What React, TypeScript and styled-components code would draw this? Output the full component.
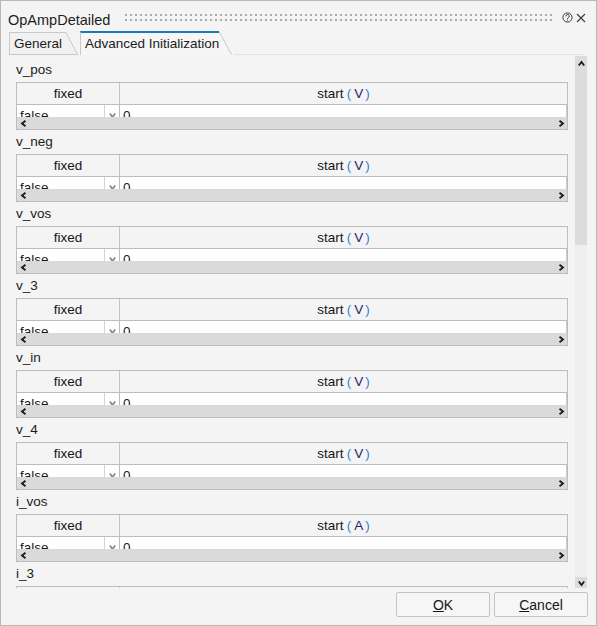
import React from 'react';
import styled, { createGlobalStyle } from 'styled-components';

const GlobalStyle = createGlobalStyle`
  html, body {
    margin: 0;
    padding: 0;
    background: #f4f4f4;
  }
  body {
    font-family: 'Liberation Sans', Arial, sans-serif;
    font-size: 13.5px;
    color: #1b1b1b;
  }
  * {
    box-sizing: border-box;
  }
`;

const Window = styled.div`
  width: 597px;
  height: 626px;
  border: 1px solid #b8b8b8;
  background: #f4f4f4;
  display: flex;
  flex-direction: column;
  overflow: hidden;
`;

// --- title bar --- //
const TitleBar = styled.div`
  height: 30px;
  flex-shrink: 0;
  display: flex;
  align-items: flex-start;
  padding: 0 10px 0 7px;
`;

const Title = styled.div`
  margin-top: 10px;
  font-size: 14.5px;
  line-height: 18px;
  color: #1e1e1e;
`;

const Grip = styled.svg`
  flex: 1;
  height: 8px;
  margin: 13px 9px 0 15px;
`;

const TitleIcon = styled.svg<{ $top: number; $gap?: number }>`
  margin-top: ${p => p.$top}px;
  margin-left: ${p => p.$gap ?? 0}px;
  flex-shrink: 0;
`;

// --- tabs --- //
const TabBar = styled.div`
  height: 24px;
  flex-shrink: 0;
  display: flex;
  align-items: flex-end;
  padding: 0 11px 0 8px;
  margin-bottom: 1px;
`;

const Tab = styled.div<{ $active?: boolean }>`
  display: flex;
  height: ${p => (p.$active ? 24 : 23)}px;
  margin-right: 2px;
`;

const TabBody = styled.div<{ $active?: boolean; $width: number }>`
  width: ${p => p.$width}px;
  border-left: 1px solid #c8c8c8;
  border-top: ${p => (p.$active ? '2px solid #1d78b3' : '1px solid #c8c8c8')};
  border-bottom: ${p => (p.$active ? 'none' : '1px solid #c8c8c8')};
  background: ${p => (p.$active ? '#f6f6f6' : '#f1f1f1')};
  padding-left: 4px;
  line-height: ${p => (p.$active ? 22 : 21)}px;
  color: #1b1b1b;
  white-space: nowrap;
`;

const TabSlant = styled.svg`
  display: block;
  flex-shrink: 0;
`;

const TabFiller = styled.div`
  flex: 1;
  height: 1px;
  background: #e2e2e2;
`;

// --- scrolling content --- //
const ScrollArea = styled.div`
  height: 532px;
  flex-shrink: 0;
  margin: 0 9px 0 7px;
  display: flex;
`;

const Content = styled.div`
  flex: 1;
  overflow: hidden;
  padding: 2px 7px 0 8px;
`;

const GroupLabel = styled.div`
  height: 24px;
  line-height: 24px;
  color: #1b1b1b;
`;

const Table = styled.div`
  border: 1px solid #bdbdbd;
  display: flex;
  flex-direction: column;
`;

const HeaderRow = styled.div`
  display: grid;
  grid-template-columns: 102px 1fr;
  height: 21px;
`;

const HeaderCell = styled.div<{ $divider?: boolean }>`
  text-align: center;
  line-height: 21px;
  border-left: ${p => (p.$divider ? '1px solid #c4c4c4' : 'none')};
  color: #151515;
  white-space: nowrap;
`;

const Paren = styled.span<{ $open?: boolean }>`
  color: #3f80d6;
  margin-left: ${p => (p.$open ? 3 : 0)}px;
`;

const Unit = styled.span`
  color: #1f2a66;
  margin: 0 2px 0 3px;
`;

const DataRow = styled.div`
  display: grid;
  grid-template-columns: 102px 1fr;
  height: 13px;
  border-top: 1px solid #bdbdbd;
  overflow: hidden;
`;

const Combo = styled.div`
  display: flex;
  background: #fff;
`;

const ComboText = styled.div`
  flex: 1;
  padding: 3px 0 0 3px;
  line-height: 16px;
  color: #1b1b1b;
`;

const ComboButton = styled.div`
  width: 15px;
  border-left: 1px solid #d2d2d2;
  display: flex;
  justify-content: center;
  padding-top: 7px;
`;

const ValueCell = styled.div`
  background: #fff;
  border-left: 1px solid #bdbdbd;
  border-right: 1px solid #cacaca;
  padding: 3px 0 0 3px;
  line-height: 16px;
  color: #1b1b1b;
`;

const HScroll = styled.div`
  height: 12px;
  background: #dadada;
  display: flex;
  align-items: center;
  justify-content: space-between;
  padding: 0 2px 0 3px;
`;

const VScroll = styled.div`
  width: 12px;
  display: flex;
  flex-direction: column;
  background: #efefef;
`;

const VThumb = styled.div`
  height: 189px;
  background: #dcdcdc;
  display: flex;
  justify-content: center;
  padding-top: 4px;
`;

const VTrack = styled.div`
  flex: 1;
`;

const VDown = styled.div`
  height: 11px;
  background: #dcdcdc;
  display: flex;
  justify-content: center;
  padding-top: 3px;
`;

// --- footer --- //
const Footer = styled.div`
  flex: 1;
  display: flex;
  justify-content: flex-end;
  align-items: flex-start;
  gap: 4px;
  padding: 4px 8px 0 0;
`;

const Button = styled.button`
  width: 94px;
  height: 25px;
  border: 1px solid #c4c4c4;
  border-radius: 2px;
  background: #f6f6f6;
  font-family: 'Liberation Sans', Arial, sans-serif;
  font-size: 14px;
  color: #161616;
  padding: 0;
  cursor: pointer;
`;

type Group = { name: string; unit: string };

const groups: Group[] = [
  { name: 'v_pos', unit: 'V' },
  { name: 'v_neg', unit: 'V' },
  { name: 'v_vos', unit: 'V' },
  { name: 'v_3', unit: 'V' },
  { name: 'v_in', unit: 'V' },
  { name: 'v_4', unit: 'V' },
  { name: 'i_vos', unit: 'A' },
  { name: 'i_3', unit: 'A' },
  { name: 'i_4', unit: 'A' },
];

const Chevron: React.FC<{ dir: 'left' | 'right' | 'up' | 'down'; color?: string }> = ({ dir, color = '#1a1a1a' }) => {
  const rot = { right: 0, down: 90, left: 180, up: 270 }[dir];
  return (
    <svg width="7" height="7" viewBox="0 0 7 7">
      <path
        d="M1.5 0.8 L5 3.5 L1.5 6.2"
        fill="none"
        stroke={color}
        strokeWidth="1.8"
        transform={`rotate(${rot} 3.5 3.5)`}
      />
    </svg>
  );
};

const InitTable: React.FC<{ group: Group }> = ({ group }) => (
  <>
    <GroupLabel>{group.name}</GroupLabel>
    <Table>
      <HeaderRow>
        <HeaderCell>fixed</HeaderCell>
        <HeaderCell $divider>
          start<Paren $open>(</Paren>
          <Unit>{group.unit}</Unit>
          <Paren>)</Paren>
        </HeaderCell>
      </HeaderRow>
      <DataRow>
        <Combo>
          <ComboText>false</ComboText>
          <ComboButton>
            <Chevron dir="down" color="#8a8a8a" />
          </ComboButton>
        </Combo>
        <ValueCell>0</ValueCell>
      </DataRow>
      <HScroll>
        <Chevron dir="left" />
        <Chevron dir="right" />
      </HScroll>
    </Table>
  </>
);

const App: React.FC = () => {
  return (
    <>
      <GlobalStyle />
      <Window>
        <TitleBar>
          <Title>OpAmpDetailed</Title>
          <Grip preserveAspectRatio="none">
            <defs>
              <pattern id="grip-dots" width="5" height="8" patternUnits="userSpaceOnUse">
                <rect x="0" y="0" width="2" height="2" fill="#ababab" />
                <rect x="0" y="5" width="2" height="2" fill="#ababab" />
              </pattern>
            </defs>
            <rect x="0" y="0" width="100%" height="8" fill="url(#grip-dots)" />
          </Grip>
          <TitleIcon $top={11} width="11" height="11" viewBox="0 0 11 11">
            <circle cx="5.5" cy="5.5" r="4.6" fill="none" stroke="#3a3a3a" strokeWidth="1" />
            <path d="M3.9 4.3 A1.7 1.6 0 1 1 6.2 5.6 C5.6 5.9 5.5 6.2 5.5 6.8" fill="none" stroke="#3a3a3a" strokeWidth="1" />
            <rect x="5" y="7.6" width="1" height="1" fill="#3a3a3a" />
          </TitleIcon>
          <TitleIcon $top={12} $gap={3} width="10" height="10" viewBox="0 0 10 10">
            <path d="M1 1 L9 9 M9 1 L1 9" stroke="#3a3a3a" strokeWidth="1.1" />
          </TitleIcon>
        </TitleBar>

        <TabBar>
          <Tab>
            <TabBody $width={57}>General</TabBody>
            <TabSlant width="12" height="23" viewBox="0 0 12 23">
              <polygon points="0,0 0.5,0.5 11.5,22.5 0,22.5" fill="#f1f1f1" />
              <path d="M0 0.5 L11.5 22.5" stroke="#c8c8c8" strokeWidth="1" fill="none" />
              <path d="M0 22.5 L12 22.5" stroke="#c8c8c8" strokeWidth="1" />
            </TabSlant>
          </Tab>
          <Tab $active>
            <TabBody $active $width={139}>Advanced Initialization</TabBody>
            <TabSlant width="13" height="24" viewBox="0 0 13 24">
              <polygon points="0,0 12.5,24 0,24" fill="#f6f6f6" />
              <path d="M0 0.5 L12.5 23.5" stroke="#c8c8c8" strokeWidth="1" fill="none" />
              <path d="M12 23.5 L13 23.5" stroke="#e2e2e2" strokeWidth="1" />
            </TabSlant>
          </Tab>
          <TabFiller />
        </TabBar>

        <ScrollArea>
          <Content>
            {groups.map(g => (
              <InitTable key={g.name} group={g} />
            ))}
          </Content>
          <VScroll>
            <VThumb>
              <Chevron dir="up" />
            </VThumb>
            <VTrack />
            <VDown>
              <Chevron dir="down" />
            </VDown>
          </VScroll>
        </ScrollArea>

        <Footer>
          <Button><u>O</u>K</Button>
          <Button><u>C</u>ancel</Button>
        </Footer>
      </Window>
    </>
  );
};

export default App;
